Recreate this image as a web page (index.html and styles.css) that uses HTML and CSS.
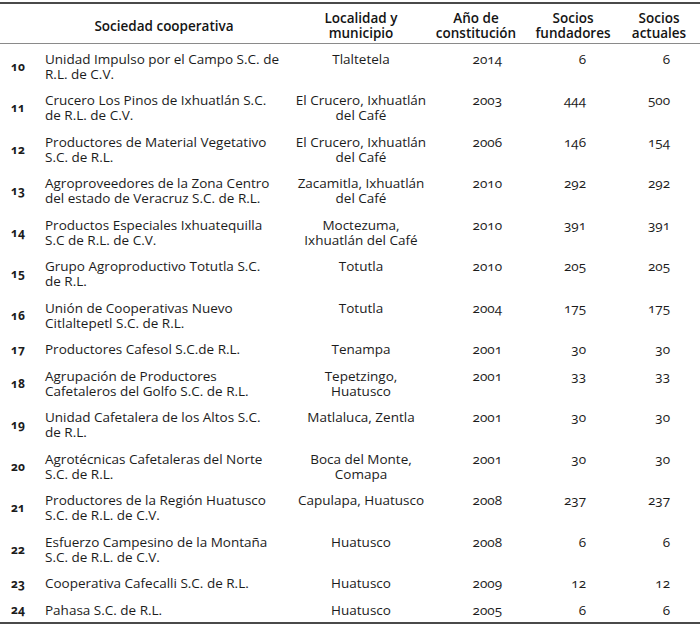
FILE: index.html
```html
<!DOCTYPE html>
<html lang="es">
<head>
<meta charset="utf-8">
<title>Sociedades cooperativas</title>
<link rel="stylesheet" href="styles.css">
</head>
<body>
<table class="coops">
  <colgroup>
    <col class="c-num">
    <col class="c-soc">
    <col class="c-loc">
    <col class="c-ano">
    <col class="c-fun">
    <col class="c-act">
  </colgroup>
  <thead>
    <tr>
      <th></th>
      <th>Sociedad cooperativa</th>
      <th>Localidad y<br>municipio</th>
      <th>Año de<br>constitución</th>
      <th>Socios<br>fundadores</th>
      <th class="h-act">Socios<br>actuales</th>
    </tr>
  </thead>
  <tbody>
    <tr><td class="num">10</td><td class="soc">Unidad Impulso por el Campo S.C. de<br>R.L. de C.V.</td><td class="loc">Tlaltetela</td><td class="ano">2014</td><td class="fun">6</td><td class="act">6</td></tr>
    <tr><td class="num">11</td><td class="soc">Crucero Los Pinos de Ixhuatlán S.C.<br>de R.L. de C.V.</td><td class="loc">El Crucero, Ixhuatlán<br>del Café</td><td class="ano">2003</td><td class="fun">444</td><td class="act">500</td></tr>
    <tr><td class="num">12</td><td class="soc">Productores de Material Vegetativo<br>S.C. de R.L.</td><td class="loc">El Crucero, Ixhuatlán<br>del Café</td><td class="ano">2006</td><td class="fun">146</td><td class="act">154</td></tr>
    <tr><td class="num">13</td><td class="soc">Agroproveedores de la Zona Centro<br>del estado de Veracruz S.C. de R.L.</td><td class="loc">Zacamitla, Ixhuatlán<br>del Café</td><td class="ano">2010</td><td class="fun">292</td><td class="act">292</td></tr>
    <tr><td class="num">14</td><td class="soc">Productos Especiales Ixhuatequilla<br>S.C de R.L. de C.V.</td><td class="loc">Moctezuma,<br>Ixhuatlán del Café</td><td class="ano">2010</td><td class="fun">391</td><td class="act">391</td></tr>
    <tr><td class="num">15</td><td class="soc">Grupo Agroproductivo Totutla S.C.<br>de R.L.</td><td class="loc">Totutla</td><td class="ano">2010</td><td class="fun">205</td><td class="act">205</td></tr>
    <tr><td class="num">16</td><td class="soc">Unión de Cooperativas Nuevo<br>Citlaltepetl S.C. de R.L.</td><td class="loc">Totutla</td><td class="ano">2004</td><td class="fun">175</td><td class="act">175</td></tr>
    <tr><td class="num">17</td><td class="soc">Productores Cafesol S.C.de R.L.</td><td class="loc">Tenampa</td><td class="ano">2001</td><td class="fun">30</td><td class="act">30</td></tr>
    <tr><td class="num">18</td><td class="soc">Agrupación de Productores<br>Cafetaleros del Golfo S.C. de R.L.</td><td class="loc">Tepetzingo,<br>Huatusco</td><td class="ano">2001</td><td class="fun">33</td><td class="act">33</td></tr>
    <tr><td class="num">19</td><td class="soc">Unidad Cafetalera de los Altos S.C.<br>de R.L.</td><td class="loc">Matlaluca, Zentla</td><td class="ano">2001</td><td class="fun">30</td><td class="act">30</td></tr>
    <tr><td class="num">20</td><td class="soc">Agrotécnicas Cafetaleras del Norte<br>S.C. de R.L.</td><td class="loc">Boca del Monte,<br>Comapa</td><td class="ano">2001</td><td class="fun">30</td><td class="act">30</td></tr>
    <tr><td class="num">21</td><td class="soc">Productores de la Región Huatusco<br>S.C. de R.L. de C.V.</td><td class="loc">Capulapa, Huatusco</td><td class="ano">2008</td><td class="fun">237</td><td class="act">237</td></tr>
    <tr><td class="num">22</td><td class="soc">Esfuerzo Campesino de la Montaña<br>S.C. de R.L. de C.V.</td><td class="loc">Huatusco</td><td class="ano">2008</td><td class="fun">6</td><td class="act">6</td></tr>
    <tr><td class="num">23</td><td class="soc">Cooperativa Cafecalli S.C. de R.L.</td><td class="loc">Huatusco</td><td class="ano">2009</td><td class="fun">12</td><td class="act">12</td></tr>
    <tr><td class="num">24</td><td class="soc">Pahasa S.C. de R.L.</td><td class="loc">Huatusco</td><td class="ano">2005</td><td class="fun">6</td><td class="act">6</td></tr>
  </tbody>
</table>
</body>
</html>
```

FILE: styles.css
```css
html, body {
  margin: 0;
  padding: 0;
  background: #ffffff;
}

body {
  padding-top: 2px;
  font-family: "Open Sans", "Noto Sans", "Liberation Sans", sans-serif;
  color: #1c1c1c;
}

.coops {
  width: 700px;
  border-collapse: collapse;
  table-layout: fixed;
  font-size: 13.5px;
  line-height: 15px;
  font-variant-numeric: oldstyle-nums;
  border-top: 2px solid #4a4a4a;
  border-bottom: 2px solid #4a4a4a;
}

.c-num { width: 36px; }
.c-soc { width: 256px; }
.c-loc { width: 138px; }
.c-ano { width: 92px; }
.c-fun { width: 102px; }
.c-act { width: 76px; }

.coops th {
  font-weight: 600;
  color: #141414;
  text-align: center;
  vertical-align: middle;
  padding: 7px 0 2px;
  border-bottom: 1px solid #8a8a8a;
}

.coops th.h-act {
  padding-right: 6px;
}

.coops td {
  vertical-align: top;
  padding: 7.5px 0 4px;
  white-space: nowrap;
}

.coops td.num {
  vertical-align: middle;
  text-align: center;
  font-weight: 700;
  font-size: 12px;
  padding-top: 5px;
  padding-bottom: 2px;
}

.coops td.soc {
  padding-left: 9px;
}

.coops td.loc {
  text-align: center;
}

.coops td.ano {
  text-align: right;
  padding-right: 20px;
}

.coops td.fun {
  text-align: right;
  padding-right: 38px;
}

.coops td.act {
  text-align: right;
  padding-right: 30px;
}
```
